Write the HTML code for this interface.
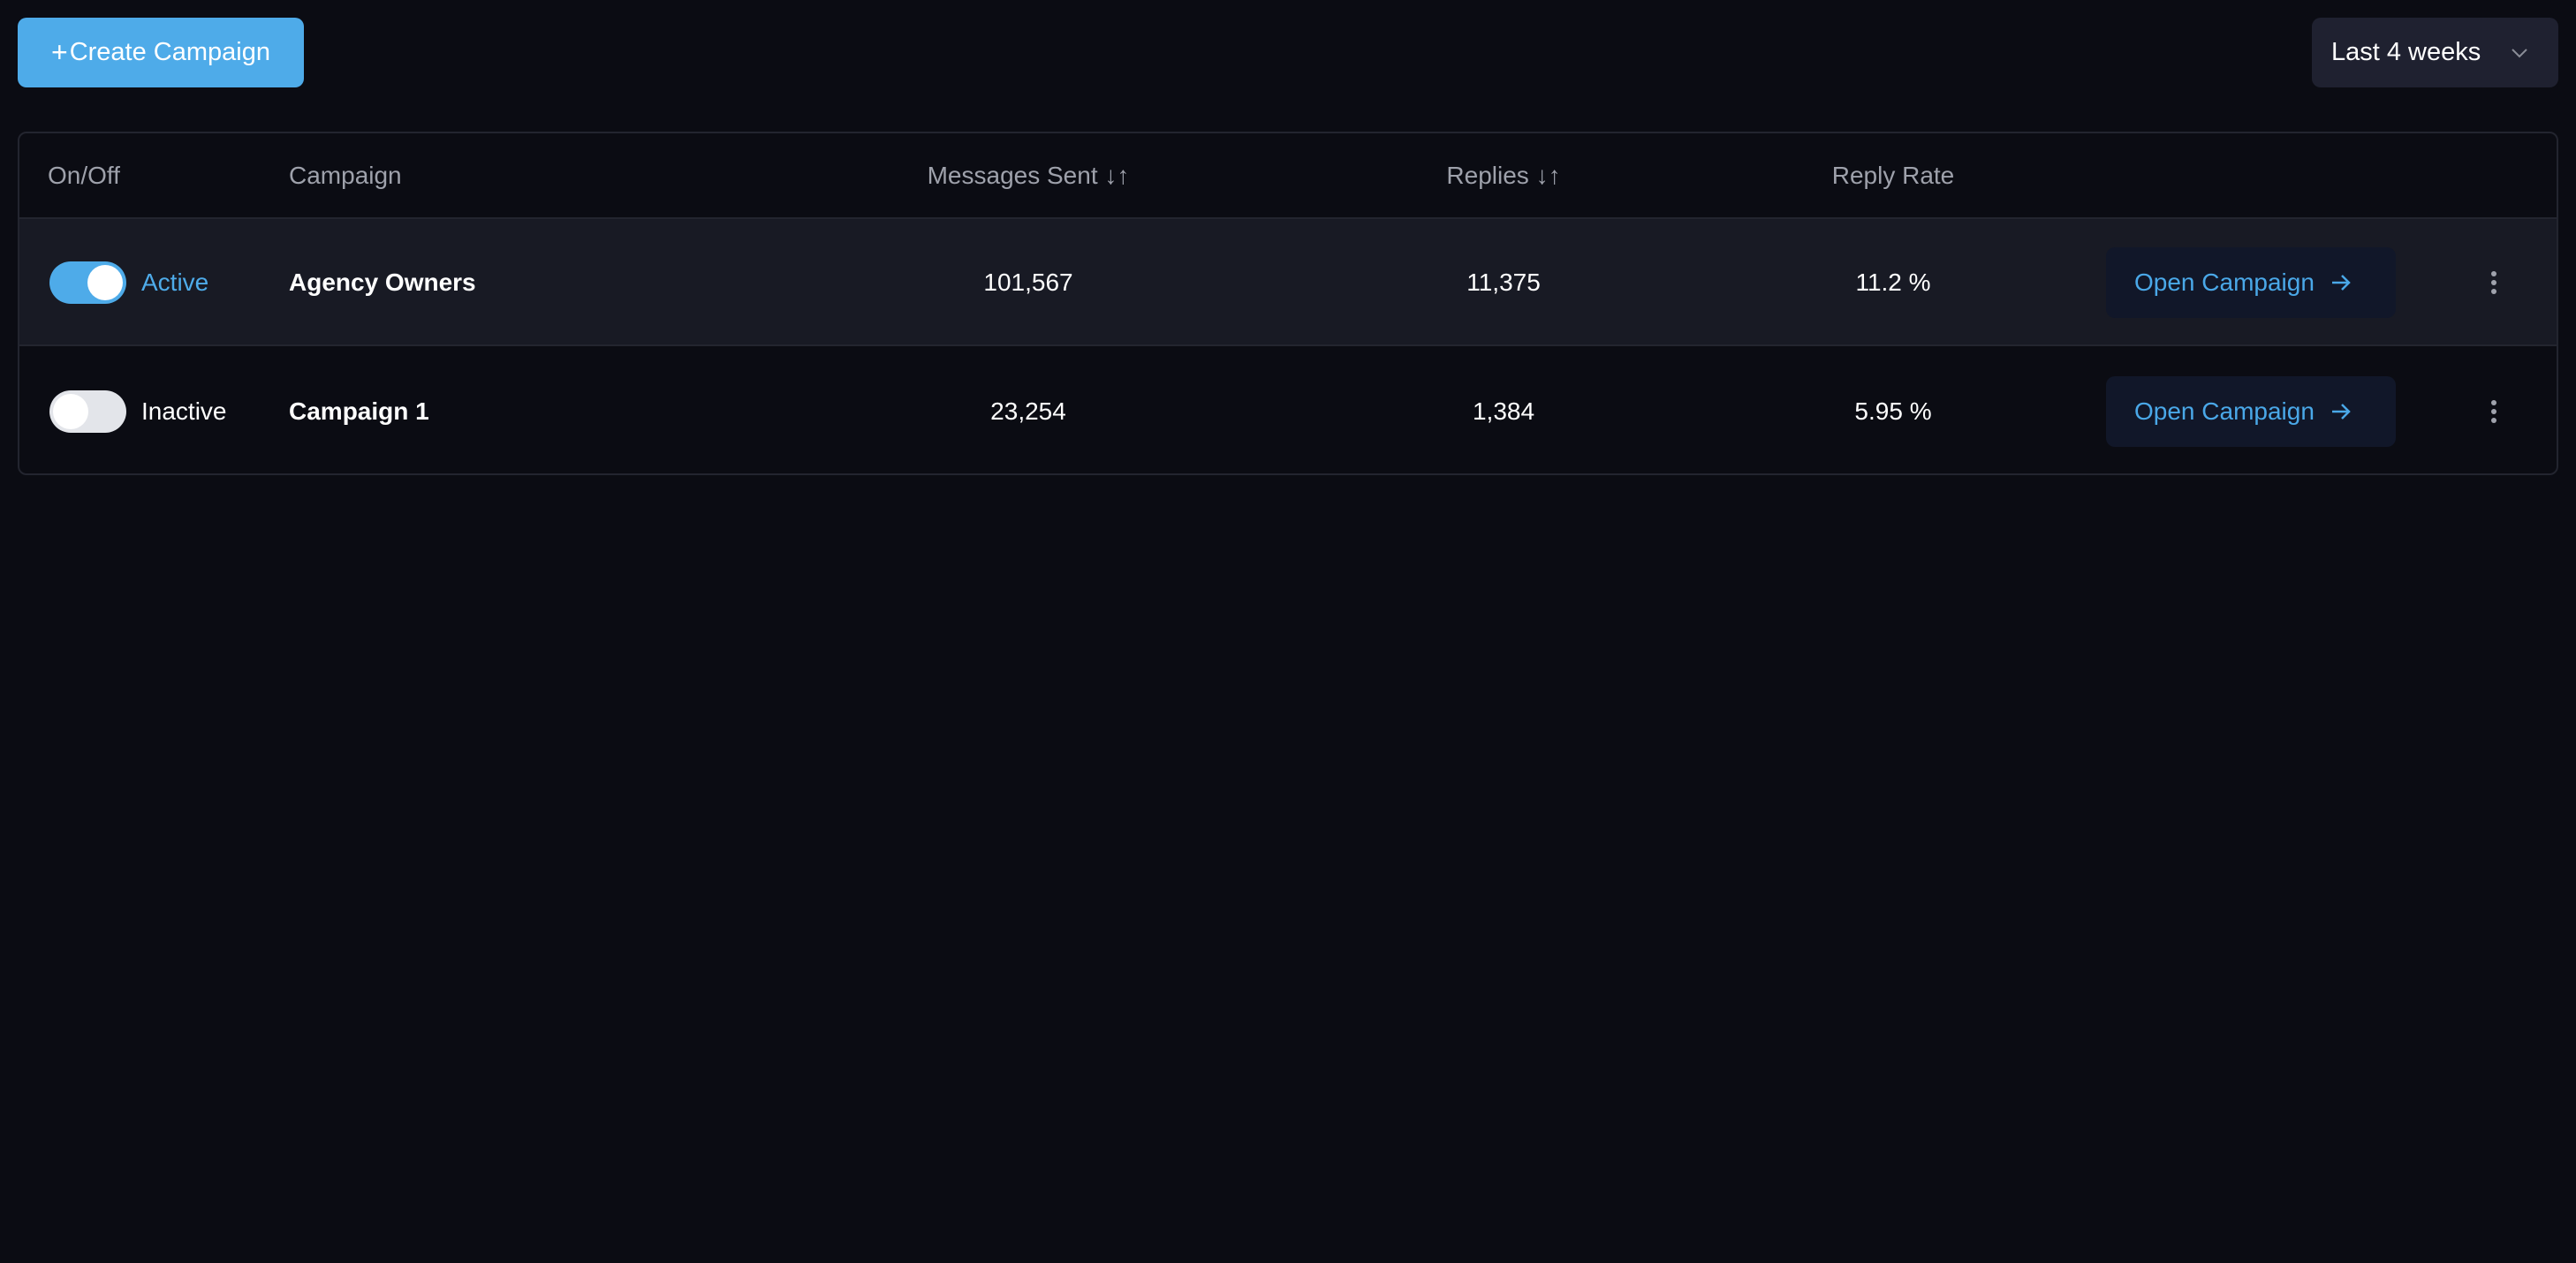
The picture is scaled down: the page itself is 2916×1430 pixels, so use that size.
<!DOCTYPE html>
<html><head><meta charset="utf-8"><style>
*{margin:0;padding:0;box-sizing:border-box}
body{width:2916px;height:1430px;background:#0b0c13;font-family:"Liberation Sans",sans-serif;color:#fff;position:relative;overflow:hidden}
.a{position:absolute}
.btn{left:20px;top:20px;width:324px;height:79px;background:#4eabe9;border-radius:10px;font-size:29px;font-weight:500;display:flex;align-items:center;justify-content:center;color:#fff}
.dd{left:2617px;top:20px;width:279px;height:79px;background:#1f2130;border-radius:10px;font-size:29px;display:flex;align-items:center;padding-left:22px}
.tbl{left:20px;top:149px;width:2876px;height:389px;border:2px solid #23252f;border-radius:10px;overflow:hidden}
.r1{left:0;top:95px;width:100%;height:146px;background:#181a24;border-top:2px solid #23252f;border-bottom:2px solid #23252f}
.h{font-size:28px;color:#9ea1ab;top:48px;transform:translateY(-50%)}
.c{font-size:28px;transform:translate(-50%,-50%);white-space:nowrap}
.l{font-size:28px;transform:translateY(-50%);white-space:nowrap}
.tg{width:87px;height:48px;border-radius:24px;transform:translateY(-50%)}
.kn{position:absolute;top:4px;width:40px;height:40px;border-radius:50%;background:#fff}
.ob{width:328px;height:80px;background:#111729;border-radius:10px;transform:translateY(-50%);color:#4aa8e8;font-size:28px;display:flex;align-items:center;padding-left:32px;gap:18px}
.dots{width:6px;transform:translate(-50%,-50%)}
.dots i{display:block;width:6px;height:6px;border-radius:50%;background:#a0a3ad;margin:4px 0}
</style></head><body>
<div class="a btn"><span style="font-weight:300;font-size:32px;margin-right:2px">+</span>Create Campaign</div>
<div class="a dd">Last 4 weeks<svg style="margin-left:34px" width="20" height="12" viewBox="0 0 20 12"><path d="M2 2l8 8 8-8" stroke="#8a8d97" stroke-width="2" fill="none"/></svg></div>
<div class="a tbl">
 <div class="a r1"></div>
 <div class="a h" style="left:32px">On/Off</div>
 <div class="a h" style="left:305px">Campaign</div>
 <div class="a h" style="left:1142px;transform:translate(-50%,-50%)">Messages Sent ↓↑</div>
 <div class="a h" style="left:1680px;transform:translate(-50%,-50%)">Replies ↓↑</div>
 <div class="a h" style="left:2121px;transform:translate(-50%,-50%)">Reply Rate</div>

 <div class="a tg" style="left:34px;top:169px;background:#4eabe9"><div class="kn" style="left:43px"></div></div>
 <div class="a l" style="left:138px;top:169px;color:#4eabe9">Active</div>
 <div class="a l" style="left:305px;top:169px;font-weight:bold">Agency Owners</div>
 <div class="a c" style="left:1142px;top:169px">101,567</div>
 <div class="a c" style="left:1680px;top:169px">11,375</div>
 <div class="a c" style="left:2121px;top:169px">11.2 %</div>
 <div class="a ob" style="left:2362px;top:169px">Open Campaign<svg width="24" height="22" viewBox="0 0 24 22"><path d="M2 11h19M13 3l8 8-8 8" stroke="#4aa8e8" stroke-width="2.5" fill="none"/></svg></div>
 <div class="a dots" style="left:2801px;top:169px"><i></i><i></i><i></i></div>

 <div class="a tg" style="left:34px;top:315px;background:#e3e5ea"><div class="kn" style="left:4px"></div></div>
 <div class="a l" style="left:138px;top:315px">Inactive</div>
 <div class="a l" style="left:305px;top:315px;font-weight:bold">Campaign 1</div>
 <div class="a c" style="left:1142px;top:315px">23,254</div>
 <div class="a c" style="left:1680px;top:315px">1,384</div>
 <div class="a c" style="left:2121px;top:315px">5.95 %</div>
 <div class="a ob" style="left:2362px;top:315px">Open Campaign<svg width="24" height="22" viewBox="0 0 24 22"><path d="M2 11h19M13 3l8 8-8 8" stroke="#4aa8e8" stroke-width="2.5" fill="none"/></svg></div>
 <div class="a dots" style="left:2801px;top:315px"><i></i><i></i><i></i></div>
</div>
</body></html>
